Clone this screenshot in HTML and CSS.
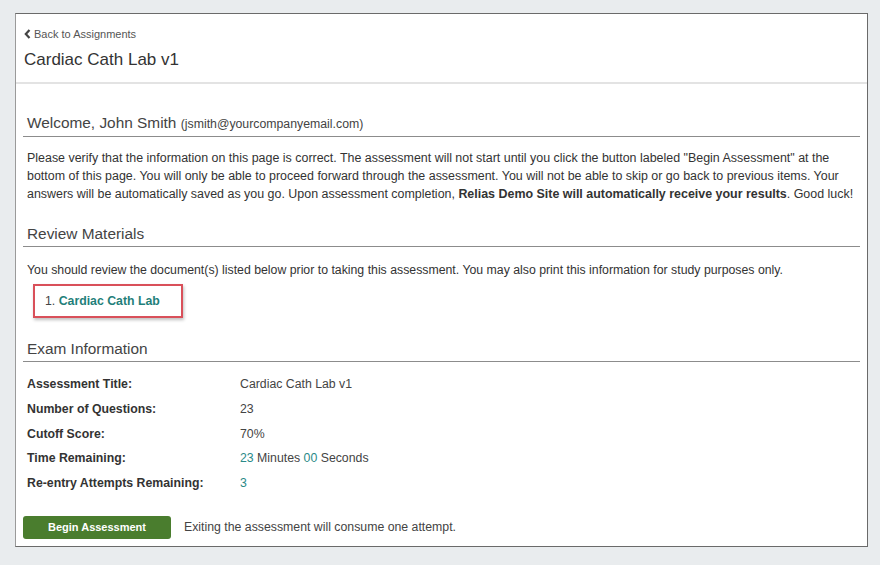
FILE: index.html
```html
<!DOCTYPE html>
<html lang="en">

<head>
    <meta charset="UTF-8">
    <meta name="viewport" content="width=device-width, initial-scale=1.0">
    <title>Cardiac Cath Lab v1</title>

    <link rel="stylesheet" href="styles.css">
</head>

<body>
    <div class="assessment-card">

        <div class="card-header">
            <a href="#" class="back-link">
                <svg class="chevron" width="7" height="10" viewBox="0 0 7 10">
                    <path d="M5.5 1 L1.8 5 L5.5 9" fill="none" stroke="#444" stroke-width="2.2" />
                </svg>Back to Assignments
            </a>
            <h1 class="card-title">Cardiac Cath Lab v1</h1>
        </div>

        <div class="card-body">

            <h2 class="section-title">Welcome, John Smith <small>(jsmith@yourcompanyemail.com)</small></h2>
            <p class="section-text intro-text">
                Please verify that the information on this page is correct. The assessment will not start until you click the button labeled "Begin Assessment" at the bottom of this page. You will only be able to proceed forward through the assessment. You will not be able to skip or go back to previous items. Your answers will be automatically saved as you go. Upon assessment completion, <b>Relias Demo Site will automatically receive your results</b>. Good luck!
            </p>

            <h2 class="section-title">Review Materials</h2>
            <p class="section-text review-text">You should review the document(s) listed below prior to taking this assessment. You may also print this information for study purposes only.</p>

            <div class="materials">
                <span class="material-item">1. <a href="#">Cardiac Cath Lab</a></span>
            </div>

            <h2 class="section-title">Exam Information</h2>
            <div class="exam-info">
                <div class="label">Assessment Title:</div>
                <div class="value">Cardiac Cath Lab v1</div>

                <div class="label">Number of Questions:</div>
                <div class="value">23</div>

                <div class="label">Cutoff Score:</div>
                <div class="value">70%</div>

                <div class="label">Time Remaining:</div>
                <div class="value"><span class="num">23</span> Minutes <span class="num">00</span> Seconds</div>

                <div class="label">Re-entry Attempts Remaining:</div>
                <div class="value"><span class="num">3</span></div>
            </div>

            <div class="actions">
                <button type="button" class="begin-btn">Begin Assessment</button>
                <span class="actions-note">Exiting the assessment will consume one attempt.</span>
            </div>

        </div>
    </div>
</body>

</html>
```

FILE: styles.css
```css
* {
    margin: 0;
    padding: 0;
    box-sizing: border-box;
}

body {
    background-color: #e9ecee;
    font-family: "Liberation Sans", Arial, sans-serif;
    color: #333;
    padding: 13px 0 0 15px;
}

.assessment-card {
    width: 853px;
    height: 534px;
    background-color: #fff;
    border: 1px solid #6a6a6a;
    border-left-color: #9a9a9a;
}

.card-header {
    padding: 12px 7px 11px 8px;
    border-bottom: 2px solid #e3e3e3;
}

.back-link {
    display: flex;
    align-items: center;
    font-size: 11px;
    line-height: 16px;
    color: #555;
    text-decoration: none;
}

.chevron {
    margin-right: 3px;
}

.card-title {
    margin-top: 7px;
    font-size: 17px;
    line-height: 22px;
    font-weight: normal;
    color: #333;
}

.card-body {
    padding: 0 7px 0 7px;
}

.section-title {
    font-size: 15.4px;
    line-height: 20px;
    font-weight: normal;
    color: #444;
    padding: 0 4px 2px 4px;
    border-bottom: 1px solid #8c8c8c;
    margin-top: 21px;
}

.card-body > .section-title:first-child {
    margin-top: 29px;
}

.section-title small {
    font-size: 12.3px;
}

.section-text {
    font-size: 12.3px;
    line-height: 18px;
    padding: 0 0 0 4px;
    margin-top: 12px;
}

.intro-text {
    font-size: 12.45px;
}

.review-text {
    margin-top: 14px;
}

.materials {
    margin-top: 5px;
    padding-left: 10px;
}

.material-item {
    display: inline-block;
    width: 150px;
    height: 34px;
    line-height: 30px;
    padding-left: 10px;
    font-size: 12.3px;
    color: #444;
    border: 2px solid #d9505a;
    box-shadow: 1px 2px 3px rgba(0, 0, 0, .25);
}

.material-item a {
    color: #1f7f7a;
    font-weight: bold;
    text-decoration: none;
}

.exam-info {
    display: grid;
    grid-template-columns: 213px 1fr;
    font-size: 12.3px;
    line-height: 24.75px;
    padding: 0 4px;
    margin-top: 10px;
}

.label {
    font-weight: bold;
    color: #333;
}

.value {
    color: #444;
}

.num {
    color: #2a8a88;
}

.actions {
    display: flex;
    align-items: center;
    margin-top: 20px;
}

.begin-btn {
    width: 148px;
    height: 23px;
    background-color: #4a7d2e;
    border: none;
    border-radius: 3px;
    color: #fff;
    font-family: "Liberation Sans", Arial, sans-serif;
    font-size: 11px;
    font-weight: bold;
}

.actions-note {
    margin-left: 13px;
    font-size: 12.3px;
    color: #444;
}
```
